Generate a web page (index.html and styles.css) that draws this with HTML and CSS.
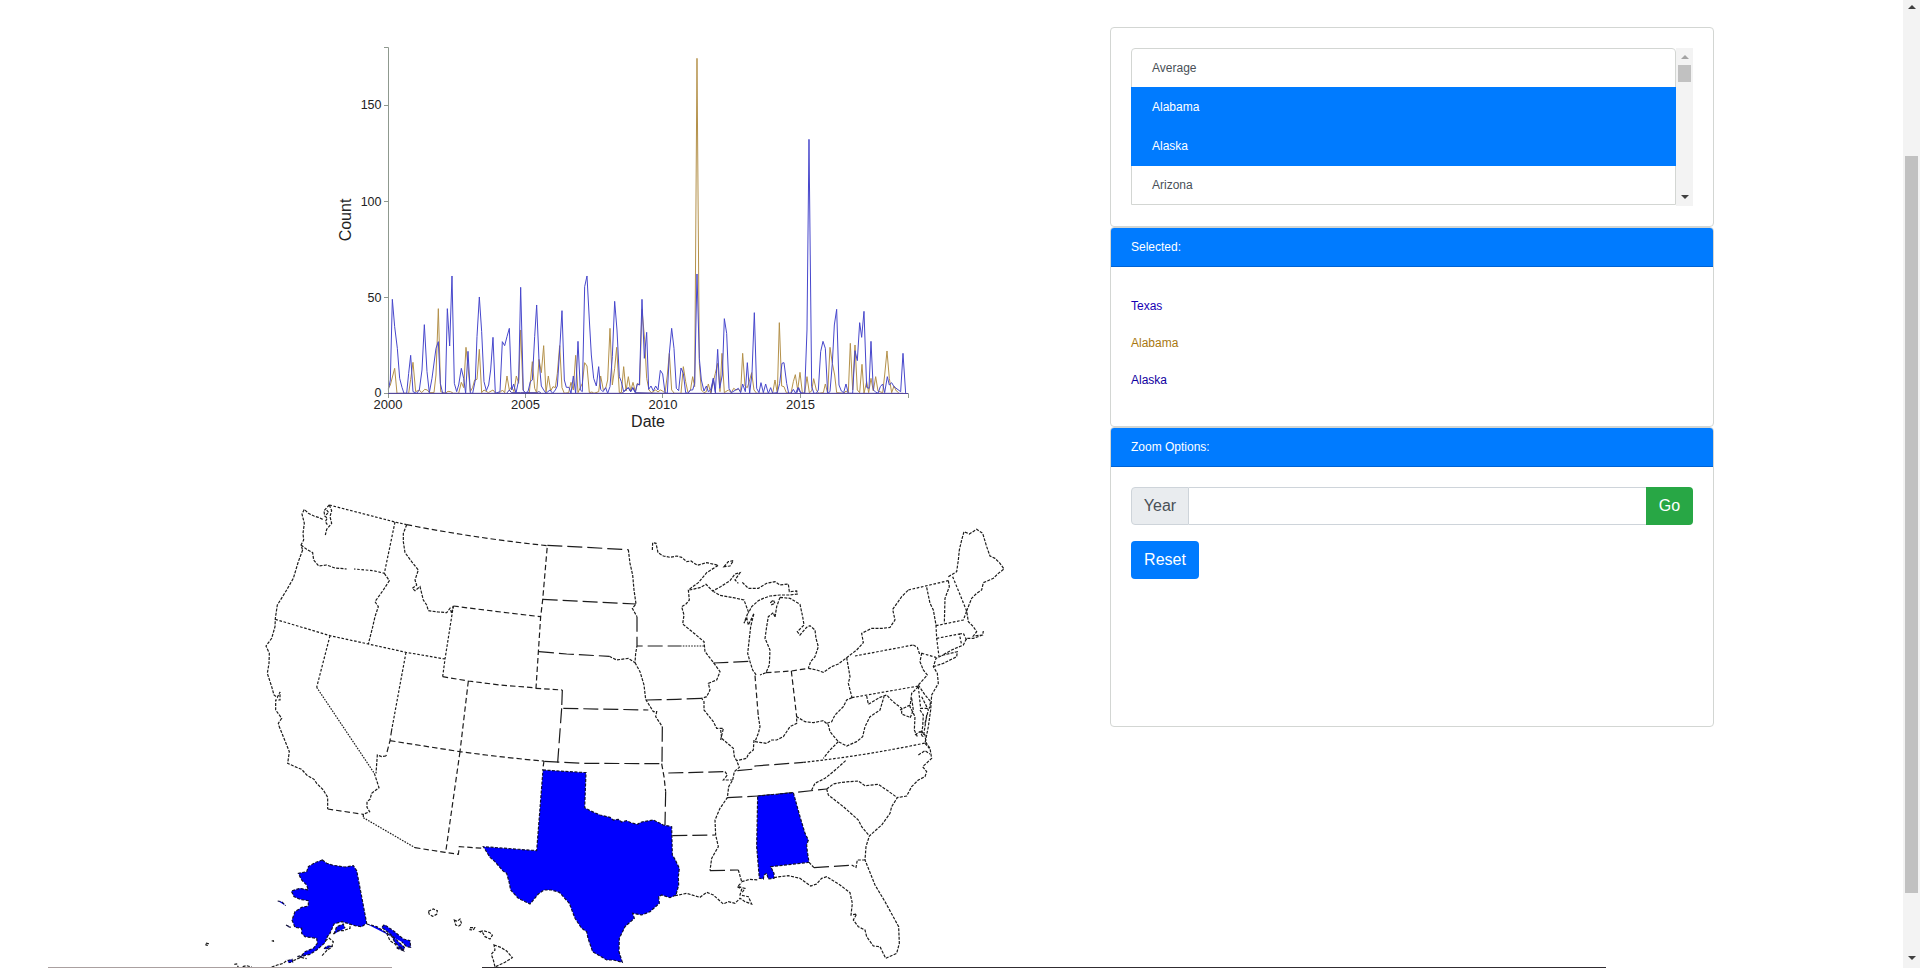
FILE: index.html
```html
<!DOCTYPE html>
<html lang="en">
<head>
<meta charset="utf-8">
<title>State counts</title>
<link rel="stylesheet" href="styles.css">
</head>
<body>
<div class="page">
  <main class="content">
    <section class="visuals">
      <svg class="chart" viewBox="0 0 620 410">
        <g class="series" transform="scale(.33333)">
          <polyline class="gold" points="205,1075 211,1065 224,1015 231,1090 266,1090 272,1048 279,997 287,1085 298,1080 305,1088 314,1078 322,1080 328,1088 342,1088 348,1035 355,836 362,1085 376,1090 384,1084 392,1085 400,1090 416,1090 424,1057 431,1073 438,952 444,1010 451,1085 458,1072 464,1050 471,1048 478,958 485,1088 492,1080 505,1088 519,1080 527,1090 540,1088 547,1080 554,1088 561,1038 568,1080 575,1070 582,1085 589,1038 596,1060 602,900 609,1080 617,1088 628,1088 637,995 644,1075 650,1088 657,988 664,1028 671,947 678,1088 685,1038 692,1083 699,1070 706,1073 712,1030 719,947 726,1073 733,1090 746,1088 753,1057 760,1080 767,976 774,1088 787,1060 794,998 801,1008 808,1088 816,1086 822,1090 836,1085 842,1038 850,1080 857,1075 863,1050 870,895 877,1065 884,1015 890,952 898,1088 904,1088 911,1010 918,1083 925,1040 932,1083 939,1057 946,1085 952,1060 959,1065 966,838 974,930 980,1045 987,1080 994,1088 1007,1080 1014,1086 1021,1080 1028,1083 1035,1090 1042,1035 1048,970 1055,1080 1063,1090 1083,1090 1090,1010 1097,1055 1104,1088 1111,1082 1118,1040 1124,1070 1131,85 1138,1000 1144,1080 1152,1088 1159,1085 1165,1062 1172,1088 1180,1055 1186,1030 1193,1000 1200,1085 1206,970 1213,1088 1225,1080 1234,1088 1241,1075 1248,1080 1255,1078 1262,1085 1268,970 1275,1068 1282,1073 1289,1050 1295,1028 1302,1080 1310,1090 1358,1090 1365,1050 1372,1090 1378,878 1385,1068 1392,1070 1399,1088 1413,1090 1420,1055 1426,1034 1433,1080 1440,1027 1447,1088 1454,1090 1461,1040 1468,1088 1475,1083 1481,1046 1489,1080 1496,1090 1510,1088 1516,1062 1523,1090 1530,952 1537,1000 1544,1035 1550,1088 1571,1090 1578,1083 1585,1088 1591,940 1598,1080 1605,945 1612,1080 1619,1088 1626,1003 1632,1090 1640,1055 1646,1088 1653,1045 1660,1083 1667,1040 1674,1083 1688,1088 1694,1035 1701,963 1708,1045 1715,1088 1722,1068 1729,1083 1736,1088"/>
          <polyline class="navy" points="205,1090 560,1090 568,1080 574,1088 602,1088 650,1088 657,1085 664,1090 746,1090 820,1090 906,1090 911,1085 925,1073 932,1085 939,1073 946,1088 1035,1090 1173,1090 1180,1045 1187,1090 1430,1090 1436,1073 1443,1090 1750,1090"/>
          <polyline class="blue" points="205,1080 211,1050 217,808 224,890 232,955 239,1045 246,1072 252,1090 260,1090 266,1030 272,976 279,1085 290,1090 298,1080 306,1020 313,884 321,1025 328,1088 336,1045 348,955 355,935 361,1060 368,1090 376,1090 382,836 389,948 396,738 403,1060 410,1085 416,1065 424,1015 431,1045 437,1090 444,964 451,1090 458,1090 466,1050 471,920 478,801 485,905 492,1055 499,1082 506,1065 512,1020 519,922 526,1090 540,1085 547,935 554,947 561,920 568,895 575,1080 581,1062 588,1090 596,1050 602,772 610,1083 617,1088 624,1085 631,1055 637,1050 644,920 650,825 657,990 664,1068 671,1080 678,1090 690,1080 698,1090 706,1080 712,1068 719,960 726,842 733,1050 739,1072 747,1072 753,1090 760,1038 767,1090 774,934 781,1080 787,1085 794,770 801,738 808,870 814,975 821,1045 829,1068 836,1010 842,1078 849,1085 857,1073 863,1090 870,1070 877,980 884,814 891,900 898,1040 904,1055 911,1085 925,1073 932,1085 938,1073 946,1088 952,1062 958,1065 966,808 973,985 980,907 986,1078 993,1068 1000,1083 1007,1068 1014,1080 1021,1021 1028,1032 1035,1088 1042,1090 1048,970 1055,895 1062,955 1069,1075 1076,1082 1083,1014 1090,1030 1097,1088 1104,1090 1111,1080 1118,1080 1124,1060 1131,732 1138,985 1144,1050 1152,1083 1159,1068 1165,1085 1172,1080 1180,1045 1186,1088 1193,958 1199,1075 1207,1035 1213,866 1220,910 1227,1075 1234,1088 1255,1075 1262,1088 1268,1062 1276,1085 1282,998 1289,1090 1296,1030 1303,848 1310,1075 1317,1088 1323,1058 1330,1088 1337,1062 1345,1090 1352,1073 1358,1090 1372,1088 1379,1060 1386,1000 1392,998 1400,1060 1406,1090 1413,1090 1420,1078 1427,1090 1434,1073 1441,1088 1454,1090 1461,900 1467,328 1475,1070 1482,1090 1489,1090 1495,1080 1502,965 1509,934 1516,955 1523,1090 1530,1085 1537,1000 1543,885 1550,838 1557,1065 1564,1083 1571,1088 1578,1062 1585,1090 1598,1090 1605,962 1612,992 1619,878 1625,922 1632,844 1640,1072 1647,1075 1653,934 1660,1080 1667,1086 1674,1090 1681,1070 1688,1062 1694,1088 1702,1040 1708,1065 1715,1058 1722,1070 1742,1085 1749,970 1757,1090"/>
        </g>
        <path class="axis" d="M64 17.5H68.5V363.5H64M64 75.5H68M64 171.5H68M64 267.5H68"/>
        <path class="axis" d="M68.5 368V363.5H588.5V368M205.5 363V368M342.5 363V368M480.5 363V368"/>
        <path class="baseline" d="M68 363.5H588"/>
        <g class="ticks ticks-y">
          <text x="61.5" y="79">150</text><text x="61.5" y="175.500">100</text><text x="61.5" y="271.500">50</text><text x="61.5" y="367">0</text>
        </g>
        <g class="ticks">
          <text x="68" y="379">2000</text><text x="205.5" y="379">2005</text><text x="343" y="379">2010</text><text x="480.5" y="379">2015</text>
        </g>
        <text class="label" x="328" y="397">Date</text>
        <text class="label" transform="translate(31 190) rotate(-90)">Count</text>
      </svg>

      <svg class="map" viewBox="0 0 830 477">
        <!-- northwest -->
        <g transform="scale(.33333)">
          <path class="coast" d="M418 45L425 62 420 80 425 100 410 118 406 135M418 45L402 62 404 78 412 84 406 95 412 104M410 60L416 68 408 74M398 88L385 82 372 78 355 70 343 58 336 72 343 100 339 130 341 150 333 165 338 180M333 165L350 178 368 188 371 210 386 228 410 225 435 234 470 237M583 250L598 272 580 300 555 335 565 350 555 380 547 415 535 462M338 180L325 215 310 265 290 300 262 345 256 385 255 410 245 445 228 468 238 490 237 520 232 550 245 590 252 615 262 622 270 606 270 630 257 630 257 660 275 685 265 700 267 708"/>
          <path class="coast" d="M650 104L640 130 640 155 645 188 665 215 685 240 675 270 680 285 667 295 675 302 690 290 700 330 710 345 715 362 745 366 770 368 780 355 785 370 790 348"/>
          <path class="short" d="M418 45L615 96 650 104M615 96L583 250 550 242 492 237M256 388L420 437 535 462 648 487 765 507M420 437L380 592M648 487L605 720M790 348L765 507 758 560"/>
          <path class="dot" d="M380 592L553 850"/>
          <path class="mid" d="M650 104Q860 145 1072 167L1058 330 1052 380 1045 487 1038 594M790 348Q920 365 1052 380M758 560L835 573 930 585 1040 594M835 573L810 785"/>
        </g>
        <!-- southwest, Alaska, Hawaii -->
        <g transform="translate(0 230) scale(.33333)">
          <path class="coast" d="M267 18L280 50 298 95 293 130 315 140 335 148 350 165 372 178 380 190 400 210 413 232 413 267M588 108L575 110 562 105 558 160M553 160L567 203 545 220 540 238 531 245 531 262 539 275 520 283 520 293"/>
          <path class="mid" d="M413 267L520 283M605 30L600 62 588 108M600 62L810 95Q960 115 1062 123M810 95L767 397M675 383L765 397 805 403 808 380 880 385M1062 123L1058 150"/>
          <path class="dot" d="M520 293L675 383"/>
          <path class="filled" d="M397 420L410 430 430 436 465 441 490 437 500 452 515 530 530 610 515 620 495 617 480 612 455 605 445 608 432 612 420 640 412 650 405 668 380 690 360 703 345 706 330 712 345 695 370 685 382 670 380 655 345 650 335 640 335 625 315 622 306 600 315 575 335 562 355 558 355 542 330 538 312 530 304 513 330 505 355 510 350 495 335 480 325 460 350 455 355 440 375 428Z"/>
          <path class="filled" d="M530 612L560 620 585 636 605 648 615 668 638 690 645 684 622 662 598 640 575 622 583 614 610 632 640 657 660 662 662 682 650 680 635 665 M432 642L440 620 460 612 465 625M263 543L275 545 287 557M288 615L302 622 295 620M402 686L412 678 428 678 408 688M293 722L306 718 308 726 296 728M322 710L338 706M620 684L640 692 630 678"/>
          <path class="coast" d="M405 662L418 655 430 665 425 682 412 690 395 708M465 630L480 625 480 612M430 642L445 632 465 632M590 640L600 662 615 672 628 690M310 722L332 712 350 716M48 669L55 671 54 676 48 675ZM245 663L250 662 251 667M133 733L140 732 145 742M158 740L170 737 185 741M245 741L262 735 280 730 292 720M715 574L730 567 742 572 740 583 728 589 718 583ZM793 600L802 604 810 597 815 612 806 618 797 615ZM840 623L854 623 850 630 840 629ZM870 635L880 632 900 638 907 646 900 657 885 650 878 638ZM912 675L932 682 950 693 967 713 945 727 915 741 910 720 904 703 915 690Z"/>
        </g>
        <!-- plains and upper Mississippi -->
        <g transform="translate(310 10) scale(.33333)">
          <path class="long" d="M142 136L385 149M128 298L408 312M117 455L200 462 328 469M411 350V438H540M440 600L530 598 605 595M187 570L185 625 445 630M640 489L748 484M487 680L486 790M185 625L173 788"/>
          <path class="dot" d="M540 438H612"/>
          <path class="mid" d="M107 565L187 570"/>
          <path class="coast" d="M385 149L390 190 398 225 402 270 408 312 397 325 411 350M328 469L350 480 385 475 405 488 407 460 411 438M405 488L420 515 432 555 437 598 460 635 470 635 467 650 487 680M457 150L458 128 468 130 474 158 490 168 510 172 530 168 545 172 560 185 573 183 592 196 620 188 655 196 620 218 595 248 565 270 568 300 558 312 545 320 552 345 548 372 580 398 612 425 615 455 640 487 660 515 650 540 625 550 630 570 620 590 605 595 612 605 612 630 640 665 650 685 670 685 662 720 M672 200L685 185 700 182 690 198Z"/>
        </g>
        <!-- Great Lakes and northeast -->
        <g transform="translate(490 20) scale(.33333)">
          <path class="coast" d="M28 240L60 233 78 223 98 243 122 230 150 212 165 192 180 188 165 210 175 220M187 217L205 235 235 235 260 220 285 215 300 225 325 222 328 245 350 243 352 252 330 255 300 255 270 258 250 265 235 272 215 290 205 310M98 243L120 256 160 263 192 270 205 305 192 340 200 322 205 345 222 310 212 350 207 395 203 430 210 455 218 480 230 497M300 262L330 265 360 283 368 320 372 345 352 365 360 375 380 352 390 347 405 360 408 385 415 410 405 440 392 455 385 475M300 262L290 290 285 322 280 308 265 320 260 350 255 385 270 420 268 465 258 488 240 495M272 278L280 270 285 280 275 284ZM385 475L410 480 430 487 455 470 475 462 500 443 530 420 550 398 545 370 575 355 610 355 630 352 645 330 638 298 665 260 685 240"/>
          <path class="coast" d="M235 620L240 650 235 670 225 695 M225 695L245 698 260 700 275 690 290 690 310 680 330 650 350 640 350 620 375 635 400 638 430 632 445 645 450 665 475 695 500 708 530 695 548 680 555 650 570 620 600 600 612 560M516 563L500 570 490 590 465 615 455 635 440 640M500 443L510 500 505 520 516 563M700 405L712 412 718 430 725 430 720 455 730 480 742 495 715 525M560 558L565 583 600 562 620 555 632 568 645 580 665 595 665 612 690 622"/>
          <path class="coast" d="M740 232L750 280 760 300 768 345M805 212L808 230 795 265 793 340M805 200L830 185 835 150 838 120 845 90 852 65 868 72 890 58 908 70 920 110 930 138 945 145 960 160 972 177 955 190 940 205 910 218 905 240 890 250 875 265 860 303 865 335 880 350 890 365 880 378 908 375 910 363M908 375L880 385 860 385 850 405 815 420 785 437M760 470L790 460 830 440 832 425 790 435 768 445 760 470 772 490 775 520 755 555 752 600 745 650 735 700 748 715M715 530L695 550 690 590 705 620 703 660 712 680M715 525L735 555 752 575 748 595M720 600L730 615 728 650 725 672M740 615L735 650 730 680M690 585L660 600M695 565L700 600 690 625M725 560L735 580 745 600 735 640"/>
          <path class="mid" d="M225 497L235 620M334 483L350 620M258 488L334 483 385 475"/>
          <path class="short" d="M525 438L700 405M516 563L715 528M685 240L805 212M818 200L860 303M768 347L850 330 860 303M770 385L838 372 845 405M768 345L770 385 777 440M838 372L850 370 860 390M715 530L722 595 748 595M725 430L768 442"/>
        </g>
        <!-- south central -->
        <g transform="translate(250 240) scale(.33333)">
          <path class="long" d="M433 100L665 101M685 129L855 125M697 317L825 315M677 185L675 285M313 94L433 100M810 422L895 420M862 203L955 198"/>
          <path class="mid" d="M665 101L672 140 677 185"/>
          <path class="coast" d="M855 125L862 135 850 150 878 150M705 497L740 490 780 502 800 487 820 495 850 522 865 515 885 520 900 505 915 515 935 522 925 500 900 495 905 478 892 470 905 458M895 420L905 455M895 470L915 475 905 490"/>
          <path class="filled" d="M309 120L438 128 434 233 450 242 480 255 510 262 520 270 535 268 545 276 560 272 575 279 592 283 605 276 640 270 660 280 670 285 695 290 697 375 705 388 718 415 715 440 716 465 708 495 690 503 665 495 656 500 658 520 630 545 605 555 578 550 583 565 555 590 538 625 537 665 547 697 520 690 500 690 458 665 444 625 440 605 425 595 405 565 388 520 358 487 335 480 312 480 295 492 270 522 235 505 212 480 207 455 200 430 188 422 165 395 150 382 130 350 290 362Z"/>
        </g>
        <!-- southeast -->
        <g transform="translate(510 240) scale(.33333)">
          <path class="coast" d="M62 0L65 25 100 55 103 80 110 92 118 112 103 125 98 150 86 170 82 203 60 235 45 270 47 315 55 350 35 385 30 422M162 30L160 60 145 72 140 85 110 92M415 35L390 60 370 85M437 92L400 125 375 145 345 160 335 180M125 455L150 448 175 450M222 443L240 440 265 437 300 445 332 468 350 462 365 445 380 440 420 465 450 488 457 520 453 555 470 552 460 570 475 590 495 600 500 620 520 648 540 650 557 685 590 670 598 640 596 590 555 515 525 465 495 390 498 350 508 318 545 285 570 250 575 230 592 203 620 198 635 170 655 150 675 140 680 125 668 110 695 85 690 55 678 38 675 15 660 0M380 177L385 195 430 230 475 270 485 290 508 318M327 397L342 413M455 405L468 412 472 390 495 390M655 75L675 62 690 72M645 15L660 5 668 20M380 177L400 162 425 157 475 153 495 167 535 163 560 180 592 203"/>
          <path class="long" d="M175 198L280 188 380 177M342 413L460 405M112 122L165 117V108L310 97"/>
          <path class="short" d="M310 97L370 90Q520 72 680 38"/>
          <path class="filled" d="M173 198L280 188 300 260 315 310 325 330 320 345 322 365 327 397 212 410 222 430 222 445 205 447 200 430 192 435 190 447 178 445 170 350Z"/>
        </g>
      </svg>
    </section>

    <aside class="panel">
      <div class="card card-list">
        <div class="scroller">
          <ul class="states">
            <li>Average</li><li class="active">Alabama</li><li class="active">Alaska</li><li>Arizona</li>
          </ul>
          <div class="bar bar-small"><i class="up muted"></i><span class="thumb"></span><i class="down"></i></div>
        </div>
      </div>
      <div class="card card-selected">
        <h2>Selected:</h2>
        <div class="names"><p class="n-blue">Texas</p><p class="n-gold">Alabama</p><p class="n-navy">Alaska</p></div>
      </div>
      <div class="card card-zoom">
        <h2>Zoom Options:</h2>
        <div class="options">
          <div class="group"><label for="year">Year</label><input id="year" type="text"><button class="go">Go</button></div>
          <button class="reset">Reset</button>
        </div>
      </div>
    </aside>
    <div class="edge"><span class="edge-left"></span><span class="edge-right"></span></div>
  </main>
  <div class="bar bar-page"><i class="up"></i><span class="thumb"></span><i class="down"></i></div>
</div>
</body>
</html>
```
FILE: styles.css
```css
* { box-sizing: border-box; }
body { margin: 0; background: #fff; font-family: "Liberation Sans", Arial, sans-serif; font-size: 12px; line-height: 18px; color: #495057; }
.page { display: flex; height: 968px; overflow: hidden; }
.content { flex: 1; display: grid; grid-template-columns: 1110px 604px; grid-template-rows: 967px 1px; }
.visuals { display: flex; flex-direction: column; padding: 30px 0 0 190px; }
.chart { width: 620px; height: 410px; margin: 0 0 50px 130px; flex: none; }
.map { width: 830px; height: 477px; flex: none; overflow: hidden; }

.series polyline, .map path { fill: none; stroke-width: 1; vector-effect: non-scaling-stroke; }
.series .gold { stroke: #b4914a; }
.series .navy { stroke: #4a3f9c; }
.series .blue { stroke: #4747cc; }
.axis { fill: none; stroke: #8f998f; }
.baseline { stroke: #55489a; }
.ticks text { font-size: 13px; fill: #222; text-anchor: middle; }
.ticks-y text { font-size: 12.500px; text-anchor: end; }
.label { font-size: 16px; fill: #222; text-anchor: middle; }

.map path { stroke: #1c1c1c; stroke-width: 1.2; }
.map .coast { stroke-dasharray: 3 1.3; }
.map .short { stroke-dasharray: 2.6 1.7; }
.map .dot { stroke-dasharray: 1.6 1.2; }
.map .mid { stroke-dasharray: 5.5 3; }
.map .long { stroke-dasharray: 15 5; }
.map .filled { fill: #00f; stroke: #101030; stroke-dasharray: 3 1.5; }

.panel { padding-top: 27px; }
.card { border: 1px solid #d3d6d3; border-radius: 4px; overflow: hidden; }
.card-list { height: 200px; padding: 20px; }
.card-selected { height: 200px; }
.card-zoom { height: 300px; }
.card h2 { margin: 0; height: 39px; padding: 10px 20px; background: #007bff; border-bottom: 1px solid #0063d4; color: #fff; font-size: 12px; font-weight: 400; line-height: 18px; }
.scroller { display: flex; height: 158px; }
.states { flex: 1; list-style: none; margin: 0; padding: 0; height: 157px; border: 1px solid #d3d6d3; border-radius: 4px 4px 0 0; }
.states li { height: 39px; padding: 10px 20px; }
.states li:first-child { height: 38px; }
.states .active { background: #007bff; color: #fff; margin: 0 -1px; padding: 11px 21px 0; height: 40px; }
.states .active + .active { padding-top: 10px; height: 39px; }
.names { padding: 30px 20px 0; }
.names p { margin: 0 0 19px; }
.n-blue { color: #1700b4; }
.n-gold { color: #a87810; }
.n-navy { color: #1000a0; }
.options { padding: 20px; }
.group { display: flex; height: 38px; margin-bottom: 16px; }
.group label { width: 58px; border: 1px solid #ced4da; border-radius: 4px 0 0 4px; background: #e9ecef; font-size: 16px; line-height: 36px; text-align: center; }
.group input { flex: 1; min-width: 0; border: 1px solid #ced4da; border-left: 0; border-right: 0; outline: 0; background: #fff; }
button { border: 0; height: 38px; padding: 0; font: 16px/38px "Liberation Sans", Arial, sans-serif; color: #fff; }
.go { width: 47px; background: #28a745; border-radius: 0 4px 4px 0; }
.reset { display: block; width: 68px; background: #007bff; border-radius: 4px; }

.bar { width: 17px; background: #f3f3f3; display: flex; flex-direction: column; align-items: center; flex: none; }
.bar .thumb { width: 13px; background: #c1c1c1; }
.bar i { border: 4px solid transparent; width: 0; }
.bar .up { border-top: 0; border-bottom-color: #404040; margin: 7px 0 6px; }
.bar .muted { border-bottom-color: #a3a3a3; }
.bar .down { border-bottom: 0; border-top-color: #404040; margin: auto 0 7px; }
.bar-small .thumb { height: 17px; }
.bar-page { height: 968px; }
.bar-page .thumb { height: 737px; margin-top: 139px; }
.bar-page .up { margin-top: 5px; margin-bottom: 8px; }
.bar-page .down { margin-bottom: 8px; }
.edge { grid-column: 1 / -1; display: flex; }
.edge-left { width: 344px; height: 1px; margin-left: 48px; background: #aaa0a0; }
.edge-right { width: 1124px; height: 1px; margin-left: 90px; background: #302c30; }
```
